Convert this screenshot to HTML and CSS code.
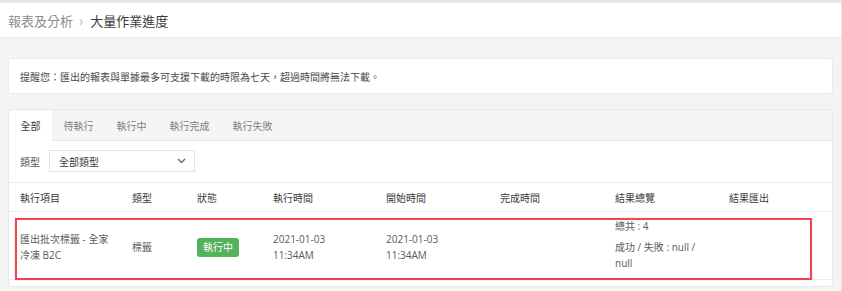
FILE: index.html
```html
<!DOCTYPE html>
<html>
<head>
  <meta charset="utf-8">
  <title>大量作業進度</title>
  <meta name="viewport" content="width=device-width, initial-scale=1">
  <link rel="stylesheet" href="styles.css">
</head>
<body>
  <div class="page">
    <div class="topbar"></div>
    <div class="header">
      <span class="crumb">報表及分析</span>
      <span class="crumb-sep">&rsaquo;</span>
      <span class="crumb crumb--current">大量作業進度</span>
    </div>

    <div class="content">
      <div class="alert">提醒您：匯出的報表與單據最多可支援下載的時限為七天，超過時間將無法下載。</div>

      <div class="card">
        <ul class="tabs">
          <li class="tab tab--active">全部</li>
          <li class="tab">待執行</li>
          <li class="tab">執行中</li>
          <li class="tab">執行完成</li>
          <li class="tab">執行失敗</li>
        </ul>

        <div class="filter">
          <span class="filter-label">類型</span>
          <div class="select">
            <span>全部類型</span>
            <svg class="select-arrow" width="9" height="6" viewBox="0 0 9 6">
              <path d="M1 1l3.5 3.5L8 1" fill="none" stroke="#666" stroke-width="1.3"/>
            </svg>
          </div>
        </div>

        <div class="grid grid--head">
          <div>執行項目</div>
          <div>類型</div>
          <div>狀態</div>
          <div>執行時間</div>
          <div>開始時間</div>
          <div>完成時間</div>
          <div>結果總覽</div>
          <div>結果匯出</div>
        </div>

        <div class="grid grid--row">
          <div class="cell-name">匯出批次標籤 - 全家冷凍 B2C</div>
          <div>標籤</div>
          <div><span class="badge">執行中</span></div>
          <div>2021-01-03<br>11:34AM</div>
          <div>2021-01-03<br>11:34AM</div>
          <div></div>
          <div class="result">
            <p>總共 : 4</p>
            <p>成功 / 失敗 : null / null</p>
          </div>
          <div></div>
          <div class="highlight"></div>
        </div>

        <div class="grid grid--row grid--empty"></div>
      </div>
    </div>
  </div>
</body>
</html>
```

FILE: styles.css
```css
ul {
  list-style: none;
  margin: 0;
  padding: 0;
}

body {
  margin: 0;
  background-color: #f4f4f4;
  font-family: "Open Sans", "Noto Sans CJK TC", sans-serif;
  color: #5a5a5a;
}

.page {
  width: 841px;
  border-right: 1px solid #e6e6e6;
  min-height: 291px;
}

.topbar {
  height: 3px;
  background: linear-gradient(#e2e2e2, #ececec);
}

.header {
  height: 34px;
  display: flex;
  align-items: center;
  padding-left: 8px;
  background-color: #fff;
  border-bottom: 1px solid #ececec;
  font-size: 13px;
}

.crumb {
  color: #8c8c8c;
}

.crumb-sep {
  color: #bbb;
  margin: 0 7px 0 6px;
  font-size: 14px;
}

.crumb--current {
  color: #3a3a3a;
}

.content {
  padding: 20px 8px 0 8px;
}

.alert {
  height: 34px;
  display: flex;
  align-items: center;
  padding: 0 11px;
  background-color: #fff;
  border: 1px solid #ebebeb;
  border-radius: 3px;
  font-size: 10px;
  color: #4a4a4a;
}

.card {
  margin-top: 15px;
  background-color: #fff;
  border: 1px solid #e8e8e8;
  border-radius: 3px;
  font-size: 10px;
}

.tabs {
  display: flex;
  height: 30px;
  background-color: #f5f5f5;
  border-bottom: 1px solid #e8e8e8;
  border-radius: 3px 3px 0 0;
}

.tab {
  display: flex;
  align-items: center;
  padding: 0 11.5px;
  color: #808080;
  font-size: 10px;
}

.tab--active {
  background-color: #fff;
  color: #3a3a3a;
  margin-bottom: -1px;
  border-radius: 3px 0 0 0;
}

.filter {
  display: flex;
  align-items: center;
  gap: 9px;
  padding: 9px 11px 10px;
  border-bottom: 1px solid #ececec;
}

.filter-label {
  color: #555;
}

.select {
  width: 146px;
  height: 22px;
  box-sizing: border-box;
  display: flex;
  align-items: center;
  justify-content: space-between;
  padding: 0 8px 0 9px;
  border: 1px solid #e3e3e3;
  color: #3a3a3a;
}

.grid {
  display: grid;
  grid-template-columns: 112px 65px 76px 113px 114px 115px 114px 1fr;
  position: relative;
}

.grid > div {
  padding: 0 11px;
}

.grid--head {
  height: 28px;
  align-items: center;
  color: #3a3a3a;
  border-bottom: 1px solid #ececec;
}

.grid--row {
  align-items: center;
  padding: 6px 0 3px;
  line-height: 16.5px;
  border-bottom: 1px solid #ececec;
}

.grid--row > .cell-name {
  padding-right: 6px;
}

.grid--empty {
  height: 6px;
  padding: 0;
  border-bottom: none;
}

.badge {
  display: inline-block;
  height: 19px;
  line-height: 19px;
  padding: 0 6px;
  background-color: #52b35c;
  border-radius: 3px;
  color: #fff;
}

.result p {
  margin: 0 0 5px;
  line-height: 16px;
}

.result {
  padding-bottom: 4px;
}

.highlight {
  position: absolute;
  left: 6px;
  top: 6px;
  width: 797px;
  height: 62px;
  box-sizing: border-box;
  border: 2px solid #ef4552;
  box-shadow: 0 0 1px rgba(239, 69, 82, 0.5);
  pointer-events: none;
}
```
